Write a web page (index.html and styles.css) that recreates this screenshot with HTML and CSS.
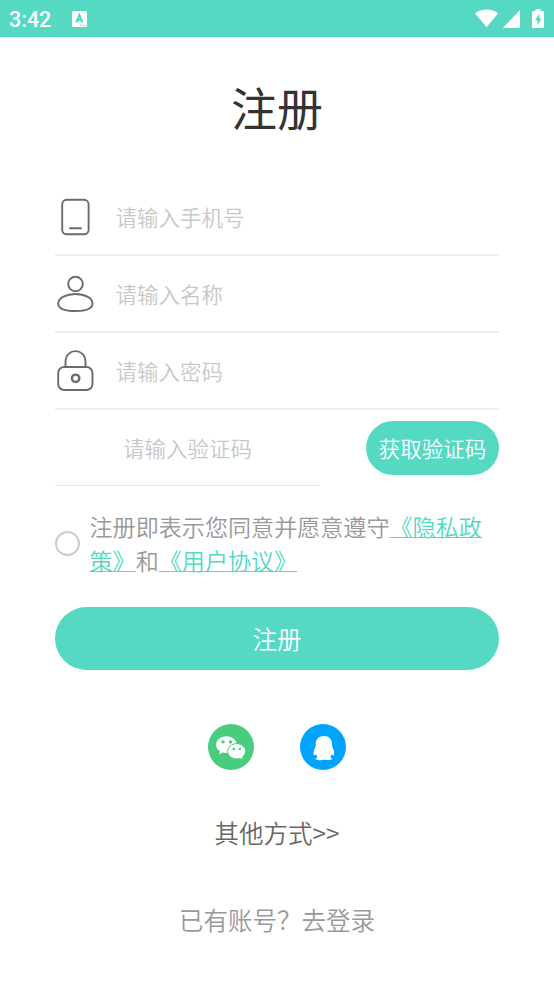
FILE: index.html
```html
<!DOCTYPE html>
<html lang="zh-CN">
<head>
<meta charset="utf-8">
<title>注册</title>
<link rel="stylesheet" href="styles.css">
</head>
<body>
<header class="status">
  <span class="time">3:42</span>
  <svg class="app-icon" width="15" height="16" viewBox="0 0 15 16"><rect width="15" height="16" rx="1.5" fill="#fff"/><path d="M4.300 11.500 7.300 4 10.300 11.500M5.300 9h4" fill="none" stroke="#55d9c3" stroke-width="2.100"/><path d="M8 14.300h1.300M10.200 14.300h1.300M12.400 14.300h1.300" stroke="#55d9c3" stroke-width="1"/></svg>
  <svg class="system" width="70" height="20" viewBox="0 0 70 20" fill="#fff"><path d="M0 4.200C6.500-.9 17-.9 23.200 4.200L11.600 18.200Z"/><path d="M45 1V19H27.700Z"/><path d="M60.500 0h5v2h2.300q1.200 0 1.200 1.200v14.600q0 1.200-1.200 1.200h-9.600q-1.200 0-1.200-1.200v-14.600q0-1.200 1.200-1.200h2.300z"/><path d="M64.300 4.700 60 11.300h2.400v5l4.200-6.900h-2.300z" fill="#55d9c3"/></svg>
</header>
<main class="page">
  <h1 class="title">注册</h1>
  <div class="field">
    <svg class="icon" width="40" height="44" viewBox="0 0 40 44"><rect x="7.200" y="4.800" width="26.400" height="34.500" rx="4.500"/><path d="M15 33.200h11"/></svg>
    <span class="hint">请输入手机号</span>
  </div>
  <div class="field">
    <svg class="icon" width="40" height="44" viewBox="0 0 40 44"><circle cx="20.500" cy="12" r="7.300"/><path d="M20.500 22C29.500 22 37.500 26 37.500 31.500C37.500 37 31 39 20.500 39S3.200 37 3.200 31.500C3.200 26 11.500 22 20.500 22Z"/></svg>
    <span class="hint">请输入名称</span>
  </div>
  <div class="field">
    <svg class="icon" width="40" height="44" viewBox="0 0 40 44"><path d="M10.500 18V13C10.500-1.500 30.500-1.500 30.500 13V18"/><rect x="3.200" y="18" width="34.300" height="23" rx="6"/><circle cx="20.600" cy="29.300" r="3.700" stroke-width="2.400"/></svg>
    <span class="hint">请输入密码</span>
  </div>
  <div class="code-row">
    <div class="code-field"><span class="hint">请输入验证码</span></div>
    <button class="send">获取验证码</button>
  </div>
  <div class="agree">
    <span class="radio"></span>
    <p class="terms">注册即表示您同意并愿意遵守<a>《隐私政<br>策》</a>和<a>《用户协议》</a></p>
  </div>
  <button class="submit">注册</button>
  <div class="social">
    <svg width="46" height="46" viewBox="0 0 46 46"><circle cx="23" cy="23" r="23" fill="#47cd7d"/><path d="M18.400 12.200c-5.800 0-10.300 3.800-10.300 8.500 0 2.800 1.500 5 4 6.600l-1.100 3.300 3.900-2c1.100.3 2.200.5 3.500.5 5.800 0 10.300-3.800 10.300-8.400s-4.500-8.500-10.300-8.500Z" fill="#fff"/><path d="M28.600 19.600c-5 0-9 3.500-9 7.700s4 7.700 9 7.700c1.200 0 2.300-.2 3.300-.5l3.300 1.800-.9-3c2-1.400 3.300-3.500 3.300-6 0-4.200-4-7.700-9-7.700Z" fill="#fff" stroke="#47cd7d" stroke-width="1"/><g fill="#47cd7d"><circle cx="15.100" cy="17.900" r="1.700"/><circle cx="22.500" cy="17.900" r="1.700"/><circle cx="25.700" cy="25" r="1.300"/><circle cx="31.800" cy="25" r="1.300"/></g></svg>
    <svg width="46" height="46" viewBox="0 0 46 46"><circle cx="23" cy="23" r="23" fill="#00a4ff"/><path d="M23.900 12c-5 0-8.200 3.500-8.200 8 0 1.300.2 2.100-.4 3.200-1.400 2.700-2.300 5.100-1.500 7.700.5 1 1.500.2 2.300-.6.3 1.300.9 2 1.700 2.900-1.300.4-2.100.9-2.100 1.600 0 1.800 6.400 1.600 8.200.6 2 1 8.100 1.100 8.100-.6 0-.7-.8-1.200-2-1.600.9-.9 1.400-1.600 1.800-2.900.7.8 1.700 1.600 2.200.6.700-2.600-.3-5.200-1.600-7.700-.5-1-.3-1.900-.3-3.200 0-4.500-3.200-8-8.200-8Z" fill="#fff"/></svg>
  </div>
  <div class="other">其他方式&gt;&gt;</div>
  <div class="login">已有账号？去登录</div>
</main>
</body>
</html>
```
FILE: styles.css
```css
* { box-sizing: border-box; }
body {
  margin: 0;
  background: #fff;
  font-family: "Noto Sans CJK SC", sans-serif;
  font-weight: 350;
  text-spacing-trim: space-all;
}
.status {
  height: 37px;
  background: #55d9c3;
  display: flex;
  align-items: center;
  padding: 0 9px;
  color: #fff;
}
.time { font: 500 21.5px/36px Roboto, sans-serif; width: 63px; padding-top: 2px; }
.system { margin-left: auto; }
.page { padding: 0 55px; display: flex; flex-direction: column; }
.title {
  margin: 34px 0 0;
  height: 108px;
  font-size: 46px;
  line-height: 70px;
  font-weight: 400;
  color: #333;
  text-align: center;
}
.field {
  height: 77px;
  display: flex;
  align-items: center;
  border-bottom: 2px solid #eee;
}
.icon {
  flex: none;
  margin-right: 20.5px;
  fill: none;
  stroke: #6b6b6b;
  stroke-width: 1.9;
  stroke-linecap: round;
}
.hint { font-size: 21.5px; line-height: 32px; color: #c8c8c8; white-space: nowrap; }
.code-row { height: 76px; display: flex; justify-content: space-between; }
.code-field {
  width: 265px;
  display: flex;
  align-items: center;
  justify-content: center;
  border-bottom: 1px solid #e8e8e8;
}
button {
  border: 0;
  padding: 0;
  background: #55d9c3;
  color: #fff;
  font-family: inherit;
  font-weight: 350;
}
.send { width: 133px; height: 54px; border-radius: 27px; margin-top: 11px; padding-bottom: 2px; font-size: 21.5px; }
.agree { height: 68px; margin-top: 23px; display: flex; align-items: center; }
.radio { flex: none; width: 25px; height: 25px; border: 2px solid #ccc; border-radius: 50%; margin-right: 9.5px; }
.terms { margin: 0; font-size: 23.08px; line-height: 34px; color: #999; white-space: nowrap; }
.terms a { color: #55d9c3; text-decoration: underline; text-decoration-thickness: 1px; text-underline-offset: 1px; text-decoration-skip-ink: none; }
.submit { height: 63px; margin-top: 30px; border-radius: 32px; font-size: 24.5px; }
.social { display: flex; justify-content: center; gap: 46px; margin-top: 54px; }
.other { margin-top: 45px; font-size: 24.5px; line-height: 36px; text-align: center; color: #666; }
.login { margin-top: 51px; font-size: 24.5px; line-height: 36px; text-align: center; color: #999; }
```
